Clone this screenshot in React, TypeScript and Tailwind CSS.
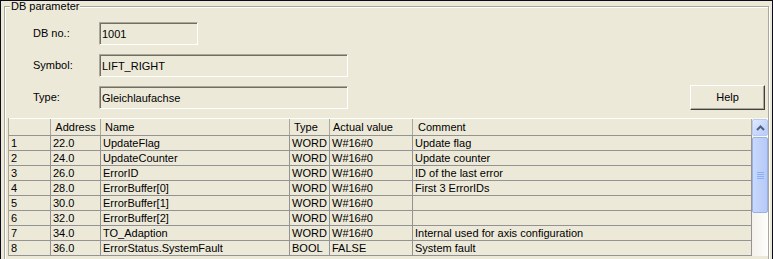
import React from "react";

const rows: string[][] = [
  ["1", "22.0", "UpdateFlag", "WORD", "W#16#0", "Update flag"],
  ["2", "24.0", "UpdateCounter", "WORD", "W#16#0", "Update counter"],
  ["3", "26.0", "ErrorID", "WORD", "W#16#0", "ID of the last error"],
  ["4", "28.0", "ErrorBuffer[0]", "WORD", "W#16#0", "First 3 ErrorIDs"],
  ["5", "30.0", "ErrorBuffer[1]", "WORD", "W#16#0", ""],
  ["6", "32.0", "ErrorBuffer[2]", "WORD", "W#16#0", ""],
  ["7", "34.0", "TO_Adaption", "WORD", "W#16#0", "Internal used for axis configuration"],
  ["8", "36.0", "ErrorStatus.SystemFault", "BOOL", "FALSE", "System fault"],
];

const widths = ["w-[42px]", "w-[50px]", "w-[189px]", "w-[40px]", "w-[83px]", "w-[339px]"];

function Field({ w, children }: { w: string; children: React.ReactNode }) {
  return (
    <div
      className={`${w} h-[23px] flex items-center pl-[2px] pt-[1px] border border-t-[#ACA899] border-l-[#ACA899] border-b-white border-r-white shadow-[inset_1px_1px_0_#716F64] bg-[#ECE9D8]`}
    >
      {children}
    </div>
  );
}

export default function App() {
  return (
    <div className="w-[773px] h-[259px] overflow-hidden bg-[#ECE9D8] border-t border-l border-r border-[#0b0b1c] font-['Liberation_Sans',Arial,sans-serif] text-[11px] leading-[11px] text-black">
      <fieldset className="ml-[3px] mr-[3px] h-[300px] border border-[#ACA899] shadow-[inset_1px_1px_0_#ffffff,1px_1px_0_#ffffff]">
        <legend className="ml-[5px] px-[1px] bg-[#ECE9D8] leading-[11px]">DB parameter</legend>
        <div className="mt-[10px] flex items-center">
          <span className="ml-[28px] w-[66px]">DB no.:</span>
          <Field w="w-[99px]">1001</Field>
        </div>
        <div className="mt-[9px] flex items-center">
          <span className="ml-[28px] w-[66px]">Symbol:</span>
          <Field w="w-[249px]">LIFT_RIGHT</Field>
        </div>
        <div className="mt-[8px] flex items-center">
          <span className="ml-[28px] w-[66px]">Type:</span>
          <Field w="w-[249px]">Gleichlaufachse</Field>
          <button className="ml-auto mr-[3px] w-[75px] h-[25px] flex items-center justify-center border border-t-white border-l-white border-b-[#404040] border-r-[#404040] shadow-[inset_-1px_-1px_0_#ACA899] bg-[#ECE9D8]">
            Help
          </button>
        </div>
        <div className="mt-[8px] ml-[3px] w-[760px] flex">
          <div className="border-l border-[#ACA899]">
            <div className="flex h-[18px] border-t border-white border-b border-b-[#939393]">
              {["", "Address", "Name", "Type", "Actual value", "Comment"].map((h, i) => (
                <div
                  key={i}
                  className={`${widths[i]} flex items-center border-r border-[#ACA899] ${
                    i === 1 ? "justify-center" : i === 4 ? "pl-[3px]" : i === 5 ? "pl-[5px]" : "pl-[4px]"
                  }`}
                >
                  {h}
                </div>
              ))}
            </div>
            {rows.map((r, ri) => (
              <div key={ri} className="flex h-[15px] border-b border-[#939393]">
                {r.map((c, ci) => (
                  <div key={ci} className={`${widths[ci]} flex items-center pl-[2px] border-r border-[#939393] whitespace-nowrap`}>
                    {c}
                  </div>
                ))}
              </div>
            ))}
          </div>
          <div className="w-[16px] flex flex-col bg-gradient-to-r from-[#F3F1EC] to-[#FEFEFB]">
            <div className="h-[17px] mt-[1px] rounded-[2px] border border-[#B8C9F2] bg-gradient-to-br from-[#E1EAFE] to-[#B6CAF7] flex items-center justify-center">
              <svg width="9" height="6" viewBox="0 0 9 6">
                <path d="M1 5 L4.5 1.5 L8 5" stroke="#4D6185" strokeWidth="2" fill="none" />
              </svg>
            </div>
            <div className="h-[76px] mt-[1px] rounded-[2px] border border-[#98B1E4] bg-gradient-to-r from-[#C9D8FC] to-[#B6CAF7] flex flex-col items-center justify-center gap-[1px]">
              <div className="w-[7px] h-[1px] bg-[#EEF4FE] border-b border-[#8CB0F8]" />
              <div className="w-[7px] h-[1px] bg-[#EEF4FE] border-b border-[#8CB0F8]" />
              <div className="w-[7px] h-[1px] bg-[#EEF4FE] border-b border-[#8CB0F8]" />
              <div className="w-[7px] h-[1px] bg-[#EEF4FE] border-b border-[#8CB0F8]" />
            </div>
          </div>
        </div>
      </fieldset>
    </div>
  );
}
